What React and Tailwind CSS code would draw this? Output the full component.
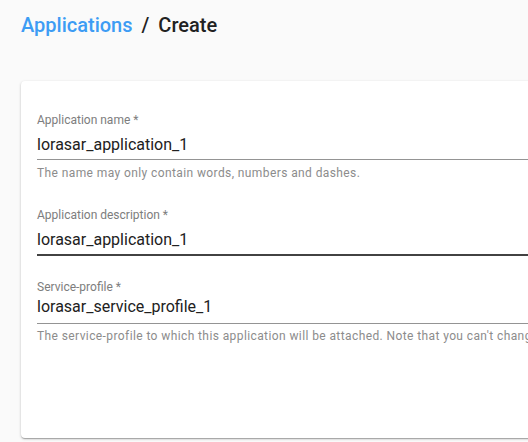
const font = { fontFamily: 'Roboto, "Liberation Sans", sans-serif' };

const Field = ({ label, value, helper, focused, labelGap, padBottom, helperGap }) => (
  <div>
    <div className="text-[12px] leading-[12px] text-[#7d7d7d]">{label} *</div>
    <div
      className={`text-[16px] leading-[19px] text-[#212121] ${
        focused ? 'border-b-2 border-[#424242]' : 'border-b border-[#949494]'
      }`}
      style={{ marginTop: labelGap, paddingBottom: padBottom }}
    >
      {value}
    </div>
    {helper && (
      <div
        className="text-[12px] leading-[12px] text-[#8c8c8c] tracking-[0.4px] whitespace-nowrap"
        style={{ marginTop: helperGap }}
      >
        {helper}
      </div>
    )}
  </div>
);

const App = () => {
  return (
    <div className="w-[528px] h-[442px] overflow-hidden bg-[#fafafa] pl-[21px]" style={font}>
      <div className="pt-[13px] h-[37px] text-[20px] leading-[24px] font-medium flex">
        <span className="text-[#3d9cf4]">Applications</span>
        <span className="text-[#212121] mx-[9px]">/</span>
        <span className="text-[#212121]">Create</span>
      </div>

      <div className="mt-[44px] w-[620px] h-[357px] bg-white rounded-[4px] shadow-[0_1px_3px_rgba(0,0,0,0.2),0_1px_1px_rgba(0,0,0,0.14),0_2px_1px_-1px_rgba(0,0,0,0.12)] pl-[16px] pr-[16px] pt-[33px]">
        <Field
          label="Application name"
          value="lorasar_application_1"
          helper="The name may only contain words, numbers and dashes."
          labelGap={9}
          padBottom={5}
          helperGap={7}
        />
        <div className="mt-[30px]">
          <Field
            label="Application description"
            value="lorasar_application_1"
            focused
            labelGap={9}
            padBottom={5}
          />
        </div>
        <div className="mt-[25px]">
          <Field
            label="Service-profile"
            value="lorasar_service_profile_1"
            helper="The service-profile to which this application will be attached. Note that you can't change this service-profile after the application has been created."
            labelGap={4}
            padBottom={7}
            helperGap={6}
          />
        </div>
      </div>
    </div>
  );
};

export default App;
